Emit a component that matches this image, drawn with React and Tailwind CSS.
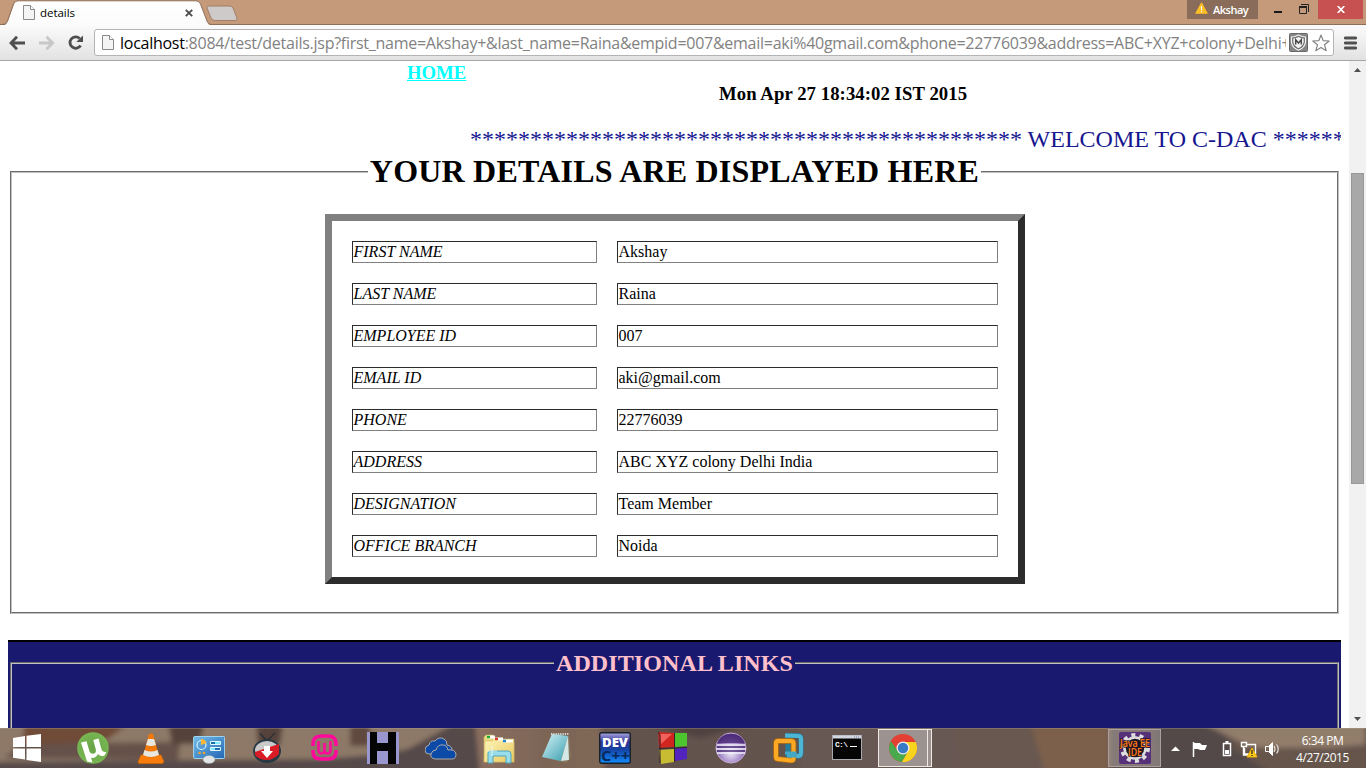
import React from "react";

const details = [
  ["FIRST NAME", "Akshay"],
  ["LAST NAME", "Raina"],
  ["EMPLOYEE ID", "007"],
  ["EMAIL ID", "aki@gmail.com"],
  ["PHONE", "22776039"],
  ["ADDRESS", "ABC XYZ colony Delhi India"],
  ["DESIGNATION", "Team Member"],
  ["OFFICE BRANCH", "Noida"],
];

function PageIcon({ className }) {
  return (
    <svg className={className} width="12" height="15" viewBox="0 0 12 15">
      <path d="M.5 .5H7.5L11.5 4.5V14.5H.5Z" fill="#f4f4f4" stroke="#8a8a8a" />
      <path d="M7.5 .5V4.5H11.5" fill="#fff" stroke="#8a8a8a" />
    </svg>
  );
}

function TitleBar() {
  return (
    <div className="relative flex h-[25px] shrink-0 bg-[#c49a7b]">
      <svg className="absolute left-0 top-0" width="1366" height="26" viewBox="0 0 1366 26">
        <defs>
          <linearGradient id="tab" x1="0" y1="0" x2="0" y2="1">
            <stop offset="0" stopColor="#fff" />
            <stop offset="1" stopColor="#fbfbfb" />
          </linearGradient>
        </defs>
        <path d="M0 24.5H1366" stroke="#8f6e58" />
        <path d="M0 25.5H4Q7 24 8 21L14 4Q15 .8 18 .8H196Q199 .8 200.500 4L207 21Q208 24.500 211 25.500V26H0Z" fill="url(#tab)" />
        <path d="M0 24.500H3Q6.500 24 7.500 21L13.500 4Q15 .8 18 .8H196Q199 .8 200.500 4L207 21Q208 24.500 211 24.500" fill="none" stroke="#8f6e58" />
        <path d="M209.500 6H229Q232 6 233 8L237 18Q237.500 20.500 235 20.500H215Q212 20.500 211 18L207 8Q206.500 6 209.500 6Z" fill="#cfcaca" stroke="#a37f67" />
      </svg>
      <div className="relative flex h-full w-[208px] items-center pl-[23px]">
        <PageIcon />
        <span className="ml-[5px] font-['Open_Sans',sans-serif] text-[11.5px] leading-[15px] tracking-[-0.05px] text-black">details</span>
        <svg className="ml-auto mr-[15px]" width="8" height="8" viewBox="0 0 8 8"><path d="M.8 .8L7.200 7.200M7.200 .8L.8 7.200" stroke="#4c4c4c" strokeWidth="1.900" /></svg>
      </div>
      <div className="relative ml-auto flex h-[19px]">
        <div className="flex w-[71px] items-center bg-[#896d5a] pl-2">
          <svg className="mb-[3px]" width="13" height="12" viewBox="0 0 13 12"><path d="M6.500 .8L12.300 11.300H.7Z" fill="#fdbd25" stroke="#fdbd25" strokeLinejoin="round" /><path d="M6.500 4V8M6.500 9V10.200" stroke="#fff" strokeWidth="1.200" /></svg>
          <span className="ml-[5px] font-['Open_Sans',sans-serif] text-[11px] font-semibold leading-4 tracking-[-0.5px] text-white">Akshay</span>
        </div>
        <svg width="60" height="19" viewBox="0 0 60 19">
          <path d="M16 12H24" stroke="#181818" strokeWidth="2" />
          <path d="M43 4.500H50.500V12" fill="none" stroke="#222" />
          <path d="M41.500 6.500H48.500V13.500H41.500Z" fill="none" stroke="#222" />
          <path d="M41 7H49" stroke="#222" strokeWidth="2" />
        </svg>
        <div className="mr-[3px] flex w-[45px] items-center justify-center bg-[#c75050]">
          <svg width="8" height="7" viewBox="0 0 8 7"><path d="M.7 0L7.300 7M7.300 0L.7 7" stroke="#fff" strokeWidth="1.700" /></svg>
        </div>
      </div>
    </div>
  );
}

function Toolbar() {
  return (
    <div className="flex h-9 shrink-0 items-center border-b border-[#a6a6a6] bg-linear-to-b from-[#fbfbfb] to-[#e2e2e2] pl-[9px]">
      <svg className="shrink-0" width="76" height="20" viewBox="0 0 76 20">
        <path d="M2.500 10H16M8 3.800L2 10L8 16.200" fill="none" stroke="#4e4e4e" strokeWidth="2.800" />
        <path d="M30 10H43M37.500 3.800L43.700 10L37.500 16.200" fill="none" stroke="#c8c8c8" strokeWidth="2.800" />
        <path d="M70.700 5.500A5.700 5.700 0 1 0 71.600 12.500" fill="none" stroke="#4e4e4e" strokeWidth="2.800" />
        <path d="M74 2.500V9H67.300Z" fill="#4e4e4e" />
      </svg>
      <div className="ml-[9px] flex h-[27px] w-[1240px] shrink-0 items-center rounded-[3px] border border-[#b4b4b4] bg-white pl-[7px]">
        <PageIcon className="shrink-0" />
        <div className="ml-[6px] w-[1166px] shrink-0 overflow-hidden whitespace-nowrap font-['Open_Sans',sans-serif] text-[16px] leading-[24px] tracking-[-0.263px] text-[#828282]">
          <span className="text-black">localhost</span>:8084/test/details.jsp?first_name=Akshay+&amp;last_name=Raina&amp;empid=007&amp;email=aki%40gmail.com&amp;phone=22776039&amp;address=ABC+XYZ+colony+Delhi+
        </div>
        <svg className="ml-[3px] shrink-0" width="19" height="19" viewBox="0 0 19 19">
          <rect x=".5" y=".5" width="18" height="18" rx="1" fill="#858585" stroke="#686868" />
          <path d="M2.500 4Q6 4 9.500 2Q13 4 16.500 4V9Q16 14.500 9.500 17.300Q3 14.500 2.500 9Z" fill="#6d6d6d" stroke="#f4f4f4" strokeWidth="1.200" />
          <path d="M4.300 5.600Q7 5.300 9.500 4Q12 5.300 14.700 5.600V9Q14 13 9.500 15.300Q5 13 4.300 9Z" fill="#f3f3f3" />
          <path d="M6.700 11.500V6.800L9.500 10L12.300 6.800V11.500" fill="none" stroke="#4a4a4a" strokeWidth="1.500" />
        </svg>
        <svg className="ml-[4px] shrink-0" width="18" height="18" viewBox="0 0 18 18"><path d="M9 1L11.200 6.700L17.200 7L12.500 10.800L14.200 16.700L9 13.400L3.800 16.700L5.500 10.800L.8 7L6.800 6.700Z" fill="#fff" stroke="#858585" strokeWidth="1.200" strokeLinejoin="round" /></svg>
      </div>
      <svg className="ml-[10px] shrink-0" width="13" height="14" viewBox="0 0 13 14"><path d="M1.300 2H11.700M1.300 7H11.700M1.300 12H11.700" stroke="#515151" strokeWidth="2.800" strokeLinecap="round" /></svg>
    </div>
  );
}

function Page() {
  return (
    <div className="flex w-[1349px] shrink-0 flex-col overflow-hidden bg-white px-2 font-['Liberation_Serif',serif] text-black">
      <div className="mt-px h-[21px] pl-[399px] text-[18.72px] font-bold leading-[21px] text-[#00ffff]"><a className="underline">HOME</a></div>
      <div className="h-[21px] pl-[711px] text-[18.72px] font-bold leading-[21px] tracking-[0.07px]">Mon Apr 27 18:34:02 IST 2015</div>
      <div className="mt-[21px] h-[28px] overflow-hidden whitespace-nowrap pl-[462px] text-[24px] leading-[28px] text-[#16168f]">
        {"*".repeat(46)} WELCOME TO C-DAC {"*".repeat(6)}
      </div>
      <fieldset className="mx-[2px] flex h-[461px] min-w-0 shrink-0 flex-col items-center border-2 border-[#c0c0c0] [border-style:groove]">
        <legend className="mx-auto px-[2px] text-[32px] font-bold leading-[37px] tracking-[0.21px]">YOUR DETAILS ARE DISPLAYED HERE</legend>
        <div className="mt-6 grid h-[370px] w-[700px] shrink-0 grid-cols-[245px_381px] content-start gap-5 border-[7px] border-t-[#808080] border-l-[#808080] border-r-[#2c2c2c] border-b-[#2c2c2c] p-5">
          {details.map(([label, value]) => (
            <React.Fragment key={label}>
              <div className="h-[22px] border border-t-[#2c2c2c] border-l-[#2c2c2c] border-r-[#808080] border-b-[#808080] px-px text-[16px] italic leading-[20px]">{label}</div>
              <div className="h-[22px] border border-t-[#2c2c2c] border-l-[#2c2c2c] border-r-[#808080] border-b-[#808080] px-px text-[16px] leading-[20px]">{value}</div>
            </React.Fragment>
          ))}
        </div>
      </fieldset>
      <div className="mt-[26px] h-[88px] shrink-0 overflow-hidden border-t-2 border-black bg-[#191970] px-[2px] pt-[7px]">
        <fieldset className="h-[200px] min-w-0 border-2 border-[#c0c0c0] [border-style:groove]">
          <legend className="mx-auto px-[2px] text-[24px] font-bold leading-[28px] tracking-[0.1px] text-[#ffc0cb]">ADDITIONAL LINKS</legend>
        </fieldset>
      </div>
    </div>
  );
}

function Scrollbar() {
  return (
    <div className="flex w-[17px] shrink-0 flex-col items-center bg-[#f1f1f1] py-[7px]">
      <svg className="shrink-0" width="7" height="4" viewBox="0 0 7 4"><path d="M3.500 0L7 4H0Z" fill="#505050" /></svg>
      <div className="mb-auto mt-[101px] h-[311px] w-[13px] shrink-0 border border-[#989898] bg-[#a8a8a8]" />
      <svg className="shrink-0" width="7" height="4" viewBox="0 0 7 4"><path d="M3.500 4L7 0H0Z" fill="#505050" /></svg>
    </div>
  );
}

function Wallpaper() {
  return (
    <svg className="absolute inset-0" width="1366" height="40" viewBox="0 0 1366 40" preserveAspectRatio="none">
      <defs>
        <filter id="soft" x="-5%" y="-20%" width="110%" height="140%"><feGaussianBlur stdDeviation="2.500" /></filter>
        <linearGradient id="mid" x1="0" x2="1">
          <stop offset="0" stopColor="#8c6f5f" /><stop offset=".5" stopColor="#7d6557" /><stop offset="1" stopColor="#806856" />
        </linearGradient>
      </defs>
      <rect width="1366" height="40" fill="#5c4e4a" />
      <g filter="url(#soft)">
        <path d="M-10 -5H470V45H-10Z" fill="#8e7968" />
        <path d="M25 -5H130L105 13Q80 22 20 29Z" fill="#704c39" />
        <path d="M20 16L180 14L178 32L5 30Z" fill="#655148" />
        <path d="M168 -5H204L200 16H172ZM256 -5H283L280 17H258Z" fill="#54433b" />
        <path d="M350 -5H370V18H350Z" fill="#604a3f" />
        <path d="M-10 34L320 31Q390 27 410 20L455 -5H490V45H-10Z" fill="#54484a" />
        <path d="M475 -5H600L610 45H480Z" fill="url(#mid)" />
        <path d="M600 -5H810V45H605Z" fill="#64534e" />
        <path d="M640 -5H760L700 10Z" fill="#50433f" />
        <path d="M800 -5H1010L1035 45H800Z" fill="#685853" />
        <path d="M955 -5H1030L1045 45H960Z" fill="#695850" />
        <path d="M1030 -5H1110V45H1045Z" fill="#7b604c" />
        <path d="M1155 -5H1210L1270 45H1160Z" fill="#524a4a" />
        <path d="M1203 -5H1366V17L1330 20H1250Z" fill="#927d6b" />
        <path d="M1225 15Q1285 25 1370 20V45H1270Z" fill="#66544b" />
      </g>
      <path d="M0 .5H1366" stroke="#c0b3a6" strokeOpacity=".28" />
    </svg>
  );
}

function Slot({ children }) {
  return <div className="flex w-[58px] shrink-0 items-center justify-center"><svg width="32" height="32" viewBox="0 0 32 32">{children}</svg></div>;
}

function Taskbar() {
  return (
    <div className="relative h-10 shrink-0 overflow-hidden bg-[#5c4e4a]">
      <Wallpaper />
      <svg className="absolute" width="0" height="0">
        <defs>
          <linearGradient id="blue" x1="0" y1="0" x2="1" y2="1"><stop offset="0" stopColor="#72bce8" /><stop offset="1" stopColor="#2467b5" /></linearGradient>
          <linearGradient id="paper" x1="0" y1="0" x2="1" y2="1"><stop offset="0" stopColor="#d7f4f7" /><stop offset="1" stopColor="#389daf" /></linearGradient>
          <linearGradient id="dev" x1="0" y1="0" x2="0" y2="1"><stop offset="0" stopColor="#aaa9e0" /><stop offset=".3" stopColor="#30349b" /><stop offset=".55" stopColor="#1543a3" /><stop offset="1" stopColor="#118eff" /></linearGradient>
          <radialGradient id="eclipse" cx=".5" cy=".65" r=".6"><stop offset="0" stopColor="#f3eefc" /><stop offset=".6" stopColor="#a68cc9" /><stop offset="1" stopColor="#4d347c" /></radialGradient>
          <linearGradient id="folder" x1="0" y1="0" x2="1" y2="1"><stop offset="0" stopColor="#fff7bb" /><stop offset="1" stopColor="#e7c75e" /></linearGradient>
          <radialGradient id="green"><stop offset="0" stopColor="#69a348" /><stop offset="1" stopColor="#77b652" /></radialGradient>
        </defs>
      </svg>
      <div className="relative flex h-full">
        <div className="flex w-[64px] shrink-0 items-center pl-[13px]">
          <svg width="28" height="28" viewBox="0 0 28 28" fill="#fff"><path d="M0 4L12 2V13H0ZM13.500 1.800L28 0V13H13.500ZM0 14.500H12V25.500L0 23.700ZM13.500 14.500H28V28L13.500 26Z" /></svg>
        </div>
        <Slot>
          <circle cx="16" cy="16" r="15.800" fill="url(#green)" />
          <path d="M4 10.500L9.500 9.200L12.500 19.500Q14 22.500 17 21.500Q19.500 20.500 18.800 17.500L16.300 8L21.500 6.500L24.500 17.500Q25.500 20.700 29.500 19.700L27.500 23.500Q23 25 21 22Q19 26.500 14 26L15.500 30.500L10 29.500Z" fill="#fff" />
        </Slot>
        <Slot>
          <path d="M6 23H26L29 30Q28 31.500 26 31.500H5Q3 31.500 3 30Z" fill="#f77c0b" stroke="#ce6505" strokeWidth=".7" />
          <path d="M14 2Q16 1 18 2L24 24Q16 29 8 24Z" fill="#f27908" />
          <path d="M13 7H19L21 13Q16 15 11 13ZM9.500 18Q16 21 22.500 18L24 23Q16 27 8 23Z" fill="#e7e6e0" />
        </Slot>
        <Slot>
          <rect x=".6" y="4.500" width="31" height="22" rx="1" fill="url(#blue)" stroke="#a3d4ed" />
          <circle cx="8.500" cy="13" r="4.500" fill="none" stroke="#d7f1fd" strokeWidth="1.200" />
          <path d="M8 13V7A6 6 0 0 1 13.500 11Z" fill="#ffb631" />
          <path d="M17.500 9.500H27.500V12.500H17.500ZM17.500 15.500H27.500V18.500H17.500Z" fill="#1c6fae" stroke="#e5f7ff" />
          <path d="M22 11H27M18 17H22" stroke="#7aeaff" strokeWidth="2" />
          <circle cx="6.500" cy="21" r="1.300" fill="#f3a12c" /><circle cx="11" cy="21" r="1.300" fill="#f3a12c" />
          <ellipse cx="16" cy="27.500" rx="6" ry="4" fill="#e2e5e5" stroke="#8f9ca3" strokeWidth=".5" />
        </Slot>
        <Slot>
          <path d="M15 8L9 1.500M17 8L24 1" stroke="#293039" strokeWidth="1.400" />
          <path d="M11 9Q16 4 21 9" fill="#293039" />
          <ellipse cx="16" cy="19" rx="14" ry="12" fill="#293944" />
          <ellipse cx="16" cy="18" rx="12" ry="9" fill="#c9c9c9" />
          <path d="M4 20Q15 16 28 12V22Q22 28 16 28Q8 28 4 23Z" fill="#d91b25" />
          <path d="M13 14H19V19H22L16 26L10 19H13Z" fill="#fff" />
        </Slot>
        <Slot>
          <g transform="translate(-1 0)">
            <path d="M5 14V12Q5 4 13 4H20Q28 4 28 12V14M5 18V20Q5 27 13 27H20Q28 27 28 20V18" fill="none" stroke="#ff0a9b" strokeWidth="3.600" />
            <path d="M10.500 10V17Q10.500 21.500 13.500 21.500Q16.500 21.500 16.500 17V11V17Q16.500 21.500 19.500 21.500Q22.500 21.500 22.500 17V10" fill="none" stroke="#ff0a9b" strokeWidth="2.600" strokeLinecap="round" />
          </g>
        </Slot>
        <Slot><path d="M0 0H32V32H0Z" fill="#9997cd" /><path d="M3 0H10V11H21V0H29V32H21V19H10V32H3Z" fill="#050505" /></Slot>
        <Slot>
          <path d="M4 22Q0 22 0 18Q0 14 4 13Q5 8 10 9Q14 4 19 7Q22 8 22 13Q27 14 27 18Q27 22 23 22Z" fill="#0c4aa8" stroke="#aeaaa7" />
          <path d="M10 27Q5 26 6 22Q7 18 11 18Q13 12 18 13Q22 13 23 18Q30 17 31 22Q31 27 27 27Z" fill="#0c4aa8" stroke="#aeaaa7" />
        </Slot>
        <Slot>
          <path d="M1 5L3 3H10L12 7H31V30H1Z" fill="#ebd77d" stroke="#c8b36a" strokeWidth=".6" />
          <path d="M2 9H10V6H20V10H31V30H1Z" fill="url(#folder)" stroke="#cdb55f" strokeWidth=".5" />
          <path d="M4 5H12M12 7H20M20 9H30" stroke="#fff" strokeWidth="3" />
          <path d="M4 5H7" stroke="#1daf35" strokeWidth="2.500" /><path d="M12 7H15" stroke="#d83b23" strokeWidth="2.500" /><path d="M20 9H23" stroke="#2487cf" strokeWidth="2.500" />
          <path d="M5 31V21Q5 19 8 19H25Q28 19 28 22V31H23V24H10V31Z" fill="#99dcea" stroke="#4fa6bd" />
          <path d="M9 14V24M4 19H14" stroke="#e8ffff" strokeWidth=".8" />
        </Slot>
        <Slot>
          <path d="M11 3L28 4L30 25L25 31L1 25Z" fill="#85765e" />
          <path d="M11 2L27 4L20 29L1 25Z" fill="url(#paper)" />
          <path d="M27 4L28 28L20 29Z" fill="#d5e7e4" />
          <path d="M10 2H28" stroke="#d2d5d1" strokeWidth="2" strokeDasharray="1.300 1" />
        </Slot>
        <Slot>
          <rect x=".7" y=".7" width="30.600" height="30.600" rx="2" fill="url(#dev)" stroke="#192029" strokeWidth="1.400" />
          <text x="3" y="15" fontFamily="Open Sans" fontWeight="800" fontSize="13" textLength="26" lengthAdjust="spacingAndGlyphs" fill="#fff">DEV</text>
          <text x="2" y="28.500" fontFamily="Open Sans" fontWeight="700" fontSize="14" textLength="29" lengthAdjust="spacingAndGlyphs" fill="#062a5c">C++</text>
        </Slot>
        <Slot>
          <path d="M1 0L17 1V15L2 16Z" fill="#d2251f" /><path d="M3 2L15 2L4 12Z" fill="#f0625c" />
          <path d="M18 1L30 1V14L18 15Z" fill="#4cc52f" /><path d="M2 18L17 17V30L4 32Z" fill="#c8bd32" />
          <path d="M18 16L30 16V27L18 29Z" fill="#5323bd" />
          <path d="M1 0L3 3V31M17.500 1V30M2 16.500L30 15.500" fill="none" stroke="#302524" />
        </Slot>
        <Slot>
          <circle cx="16" cy="16" r="15" fill="url(#eclipse)" stroke="#caacd9" />
          <path d="M2 11Q5 2 16 2Q27 2 30 11Z" fill="#4c2b78" opacity=".8" />
          <path d="M2 13H30M1 17H31M2 21H30" stroke="#f1edf8" strokeWidth="1.500" />
          <path d="M2 15H30M2 19H30" stroke="#4c3177" strokeWidth="1.500" />
        </Slot>
        <Slot>
          <path d="M13 3.500L25 3.500Q28 4 28 7V21Q28 24 25 24H15V7.500" fill="none" stroke="#247d9b" strokeWidth="5" />
          <path d="M12 3.500L25 4Q28 4 28 7V21Q28 24 25 24H14" fill="none" stroke="#4db6d5" strokeWidth="4" />
          <path d="M4 9H18Q20.500 9 20.500 11.500V26Q20.500 28.500 18 28.500L5 27Q3 27 3 24.500V11.500Q3 9 5 9" fill="none" stroke="#b96f0e" strokeWidth="5.500" />
          <path d="M4 9H18Q20.500 9 20.500 11.500V26Q20.500 28.500 18 28.500L5 27Q3 27 3 24.500V11.500Q3 9 5 9" fill="none" stroke="#fba824" strokeWidth="4" />
          <path d="M12 21H22V24H14" fill="none" stroke="#43a8c6" strokeWidth="3" />
        </Slot>
        <Slot>
          <rect x="1.500" y="3.500" width="29" height="24" fill="#050505" stroke="#a9abb0" />
          <path d="M2 5H30" stroke="#d3d7e1" strokeWidth="3" /><path d="M23 5H29" stroke="#7487a5" strokeDasharray="1 1" />
          <text x="4" y="15" fontFamily="Liberation Mono" fontSize="8" fontWeight="bold" fill="#fff" textLength="13">C:\</text><path d="M19 14.500H26" stroke="#fff" />
        </Slot>
        <div className="ml-[2px] flex w-[54px] shrink-0 py-px">
          <div className="flex w-[50px] items-center justify-center border border-[#eee9e2] bg-white/35">
            <svg width="28" height="28" viewBox="0 0 28 28">
              <circle cx="14" cy="14" r="14" fill="#e33f32" />
              <path d="M1.900 7A14 14 0 0 0 13 28L19.200 17H8.800Z" fill="#48aa4c" />
              <path d="M14 8H26.700A14 14 0 0 1 13 28L19.200 17Z" fill="#f9d41e" />
              <circle cx="14" cy="14" r="6.500" fill="#eee" /><circle cx="14" cy="14" r="5.200" fill="#377bc6" />
            </svg>
          </div>
          <div className="w-[4px] border border-l-0 border-[#eee9e2] bg-white/35" />
        </div>
        <div className="ml-[176px] flex w-[53px] shrink-0 py-px">
          <div className="flex w-full items-center justify-center border border-[#aaa0a1] bg-white/25">
            <svg width="32" height="32" viewBox="0 0 32 32">
              <rect width="32" height="32" rx="2" fill="#563079" />
              <circle cx="16" cy="16" r="13" fill="none" stroke="#ddd" strokeWidth="4" strokeDasharray="4 4.170" />
              <circle cx="16" cy="16" r="10.500" fill="#171821" stroke="#ddd" strokeWidth="2.500" />
              <g fontFamily="Open Sans" fontWeight="600" fill="#ff7b12" stroke="#25172a" strokeWidth="1.400" paintOrder="stroke">
                <text x="1" y="15" fontSize="10" textLength="30" lengthAdjust="spacingAndGlyphs">Java EE</text>
                <text x="9" y="24" fontSize="10" textLength="14" lengthAdjust="spacingAndGlyphs">IDE</text>
              </g>
            </svg>
          </div>
        </div>
        <svg className="ml-[5px] shrink-0" width="120" height="40" viewBox="0 0 120 40">
          <path d="M5 23L9.500 18.500L14 23Z" fill="#fff" />
          <path d="M27.500 14V29" stroke="#fff" strokeWidth="1.500" /><path d="M28 15H34L36 17L41 17L39 22H34L32 21H28Z" fill="#fff" />
          <rect x="57.500" y="15.500" width="7" height="12" fill="none" stroke="#fff" strokeWidth="1.500" /><path d="M59.500 14H62.500" stroke="#fff" strokeWidth="2" /><path d="M59 22H63V26H59Z" fill="#fff" />
          <path d="M80.500 16.500H89.500V26H78.500V20M75.500 14.500H80.500V18.500H75.500ZM77.500 19V27H82" fill="none" stroke="#fff" strokeWidth="1.400" />
          <path d="M86 20L91 29H81Z" fill="#ffcb1b" stroke="#edb20d" /><path d="M86 22V26M86 27V28" stroke="#222" strokeWidth="1.200" />
          <path d="M99.500 18.500H102.500L106.500 14.500V27.500L102.500 23.500H99.500Z" fill="none" stroke="#fff" /><path d="M103 18L106 15V27L103 24Z" fill="#fff" /><path d="M108 18Q110 21 108 24M110.500 16.500Q114 21 110.500 25.500" fill="none" stroke="#e4deda" strokeWidth="1.200" />
        </svg>
        <div className="flex w-[73px] shrink-0 flex-col items-center pt-[4px] font-['Open_Sans',sans-serif] text-[12px] leading-[17px] tracking-[-0.45px] text-white">
          <span>6:34 PM</span><span>4/27/2015</span>
        </div>
      </div>
    </div>
  );
}

export default function App() {
  return (
    <div className="flex h-[768px] w-[1366px] flex-col overflow-hidden bg-white">
      <TitleBar />
      <Toolbar />
      <div className="flex h-[667px] shrink-0"><Page /><Scrollbar /></div>
      <Taskbar />
    </div>
  );
}
